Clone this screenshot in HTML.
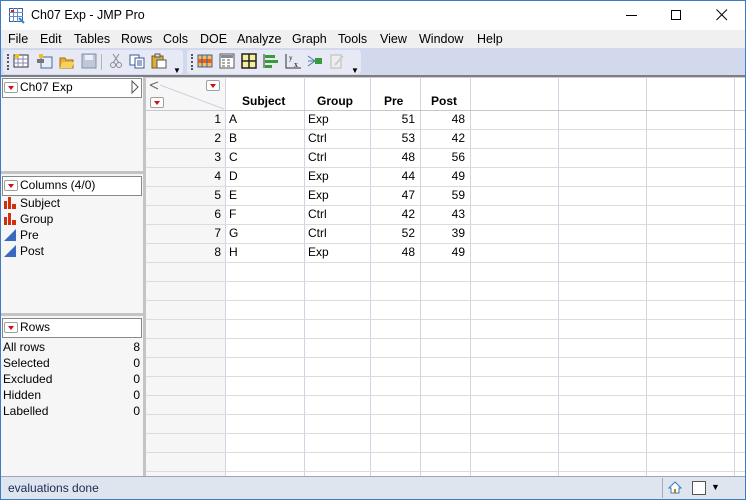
<!DOCTYPE html>
<html><head><meta charset="utf-8">
<style>
*{margin:0;padding:0;box-sizing:border-box}
body{width:746px;height:500px;overflow:hidden;background:#fff;font-family:"Liberation Sans",sans-serif;font-size:12px;color:#000;position:relative}
.a{position:absolute}
.menu span{position:absolute;top:32px;font-size:12.5px}
.tri{display:inline-block;width:14px;height:11px;border:1px solid #a0a0a0;border-radius:2px;background:#fff;position:absolute}
.tri:after{content:"";position:absolute;left:3px;top:3px;border-left:3.5px solid transparent;border-right:3.5px solid transparent;border-top:4px solid #d01010}
.lp{font-size:12px}
.vl{position:absolute;top:77px;width:1px;height:400px;background:#d3d3e3}
.hl{position:absolute;left:146px;width:600px;height:1px;background:#dcdcdc}
.c{position:absolute;font-size:12px;line-height:19px}
.r{text-align:right}
.ico{position:absolute;top:53px;width:16px;height:16px}
</style></head><body>
<div class="a" style="left:0;top:0;width:746px;height:500px;border:1px solid #3c7dc4;pointer-events:none;z-index:9"></div>
<!-- title -->
<svg class="a" style="left:9px;top:8px" width="16" height="16"><rect x="0.5" y="0.5" width="13" height="13" fill="#fff" stroke="#3a5fa8"/><path d="M0 4.5H14M0 8.5H14M4.5 0V14M8.5 0V14" stroke="#6a8ac8"/><rect x="2" y="2" width="3" height="2" fill="#d02020"/><path d="M10 10l5 5" stroke="#2a8ad0" stroke-width="2"/></svg>
<div class="a" style="left:31px;top:8px;font-size:12.5px">Ch07 Exp - JMP Pro</div>
<div class="a" style="left:626px;top:15px;width:11px;height:1px;background:#000"></div>
<div class="a" style="left:671px;top:10px;width:10px;height:10px;border:1px solid #000"></div>
<svg class="a" style="left:716px;top:9px" width="12" height="12"><path d="M0.5 0.5L11 11M11 0.5L0.5 11" stroke="#000"/></svg>
<!-- menu -->
<div class="a menu" style="left:1px;top:30px;width:744px;height:18px;background:#f0f0f0">
</div>
<div class="menu">
<span style="left:8px">File</span><span style="left:40px">Edit</span><span style="left:74px">Tables</span><span style="left:121px">Rows</span><span style="left:163px">Cols</span><span style="left:200px">DOE</span><span style="left:237px">Analyze</span><span style="left:292px">Graph</span><span style="left:338px">Tools</span><span style="left:380px">View</span><span style="left:419px">Window</span><span style="left:477px">Help</span>
</div>
<!-- toolbar -->
<div class="a" style="left:1px;top:48px;width:744px;height:28px;background:#d3d9ec"></div>
<div class="a" style="left:3px;top:50px;width:180px;height:24px;background:#e7eaf4;border-radius:3px"></div>
<div class="a" style="left:187px;top:50px;width:174px;height:24px;background:#e7eaf4;border-radius:3px"></div>
<div class="a" style="left:7px;top:54px;width:2px;height:16px;border-left:2px dotted #555"></div>
<div class="a" style="left:191px;top:54px;width:2px;height:16px;border-left:2px dotted #555"></div>
<svg class="ico" style="left:13px"><rect x="1" y="2" width="14" height="12" fill="#fff" stroke="#334"/><path d="M1 6H15M1 10H15M5 2V14M10 2V14" stroke="#88a"/><rect x="2" y="1" width="4" height="4" fill="#f0c020"/></svg>
<svg class="ico" style="left:37px"><rect x="4" y="4" width="11" height="11" fill="#e8eef8" stroke="#4a6a9a"/><rect x="0" y="6" width="7" height="4" fill="#777"/><rect x="2" y="1" width="4" height="4" fill="#f0c020"/></svg>
<svg class="ico" style="left:59px"><path d="M1 5h5l1 2h7v8H1z" fill="#e8b030" stroke="#a07010"/><path d="M3 9h12l-2 6H1z" fill="#f8d060"/></svg>
<svg class="ico" style="left:81px"><rect x="1" y="1" width="14" height="14" fill="#c0c8d8" stroke="#8090a8"/><rect x="4" y="2" width="8" height="5" fill="#eef"/></svg>
<div class="a" style="left:101px;top:54px;width:1px;height:16px;background:#b0b4c0"></div>
<svg class="ico" style="left:108px"><circle cx="5" cy="12" r="2.5" fill="none" stroke="#889"/><circle cx="11" cy="12" r="2.5" fill="none" stroke="#889"/><path d="M5 10L11 1M11 10L5 1" stroke="#889"/></svg>
<svg class="ico" style="left:129px"><rect x="1" y="2" width="9" height="10" fill="#fff" stroke="#3a5a9a"/><rect x="6" y="5" width="9" height="10" fill="#fff" stroke="#3a5a9a"/><path d="M8 8h5M8 10h5M8 12h5" stroke="#3a5a9a"/></svg>
<svg class="ico" style="left:151px"><rect x="1" y="3" width="11" height="12" fill="#d8b040" stroke="#7a5a10"/><rect x="4" y="1" width="5" height="3" fill="#ddd" stroke="#555"/><rect x="6" y="7" width="9" height="8" fill="#fff" stroke="#555"/></svg>
<div class="a" style="left:173px;top:66px;font-size:8px">&#9660;</div>
<svg class="ico" style="left:197px"><rect x="1" y="2" width="14" height="12" fill="#f0c060" stroke="#4060a0"/><rect x="1" y="6" width="14" height="4" fill="#e86020"/><path d="M5 2V14M10 2V14" stroke="#4060a0"/></svg>
<svg class="ico" style="left:219px"><rect x="1" y="1" width="14" height="14" fill="#fff" stroke="#555"/><rect x="2" y="2" width="12" height="3" fill="#889"/><path d="M3 7h3M8 7h3M3 10h3M8 10h3M3 13h3M8 13h3" stroke="#555"/></svg>
<svg class="ico" style="left:241px"><rect x="1" y="1" width="14" height="14" fill="#f4ef9a" stroke="#222" stroke-width="1.5"/><path d="M8 1V15M1 8H15" stroke="#222" stroke-width="1.5"/></svg>
<svg class="ico" style="left:263px"><path d="M1 1V15" stroke="#333"/><rect x="2" y="2" width="10" height="3" fill="#3a9a3a"/><rect x="2" y="7" width="13" height="3" fill="#3a9a3a"/><rect x="2" y="12" width="7" height="3" fill="#3a9a3a"/></svg>
<svg class="ico" style="left:285px"><path d="M1 1V15H16" stroke="#333" fill="none"/><text x="4" y="7" font-size="7" font-family="Liberation Serif">y</text><text x="9" y="14" font-size="8" font-family="Liberation Serif">x</text></svg>
<svg class="ico" style="left:307px"><path d="M1 3L8 8M1 8H8M1 13L8 8" stroke="#4a7ab0"/><rect x="8" y="5" width="7" height="6" fill="#3a9a3a"/></svg>
<svg class="ico" style="left:329px"><rect x="2" y="2" width="10" height="13" fill="#eee" stroke="#bbb"/><path d="M6 12L14 3" stroke="#ccc" stroke-width="2"/></svg>
<div class="a" style="left:351px;top:66px;font-size:8px">&#9660;</div>
<div class="a" style="left:1px;top:75px;width:744px;height:2px;background:#7c7c84"></div>
<!-- left panel -->
<div class="a" style="left:1px;top:77px;width:142px;height:400px;background:#f6f6f6"></div>
<div class="a" style="left:143px;top:77px;width:3px;height:400px;background:#c4c4c4"></div>
<div class="a" style="left:2px;top:78px;width:140px;height:20px;background:#fff;border:1px solid #888"></div>
<span class="tri" style="left:4px;top:82px"></span>
<div class="a lp" style="left:20px;top:80px">Ch07 Exp</div>
<svg class="a" style="left:131px;top:80px" width="8" height="14"><path d="M1 1L7 7L1 13Z" fill="#fff" stroke="#555"/></svg>
<div class="a" style="left:1px;top:171px;width:142px;height:3px;background:#c4c4c4"></div>
<div class="a" style="left:2px;top:176px;width:140px;height:20px;background:#fff;border:1px solid #888"></div>
<span class="tri" style="left:4px;top:180px"></span>
<div class="a lp" style="left:20px;top:178px">Columns (4/0)</div>
<svg class="a" style="left:4px;top:197px" width="12" height="12"><rect x="0" y="4" width="3" height="8" fill="#d03010"/><rect x="4" y="0" width="3" height="12" fill="#d03010"/><rect x="8" y="7" width="4" height="5" fill="#d03010"/></svg>
<div class="a lp" style="left:20px;top:196px">Subject</div>
<svg class="a" style="left:4px;top:213px" width="12" height="12"><rect x="0" y="4" width="3" height="8" fill="#d03010"/><rect x="4" y="0" width="3" height="12" fill="#d03010"/><rect x="8" y="7" width="4" height="5" fill="#d03010"/></svg>
<div class="a lp" style="left:20px;top:212px">Group</div>
<svg class="a" style="left:4px;top:229px" width="12" height="12"><path d="M0 12L12 0V12Z" fill="#3a6ac0"/></svg>
<div class="a lp" style="left:20px;top:228px">Pre</div>
<svg class="a" style="left:4px;top:245px" width="12" height="12"><path d="M0 12L12 0V12Z" fill="#3a6ac0"/></svg>
<div class="a lp" style="left:20px;top:244px">Post</div>
<div class="a" style="left:1px;top:313px;width:142px;height:3px;background:#c4c4c4"></div>
<div class="a" style="left:2px;top:318px;width:140px;height:20px;background:#fff;border:1px solid #888"></div>
<span class="tri" style="left:4px;top:322px"></span>
<div class="a lp" style="left:20px;top:320px">Rows</div>
<div class="a lp" style="left:3px;top:339px;width:137px;line-height:16px">
<div>All rows<span style="float:right">8</span></div>
<div>Selected<span style="float:right">0</span></div>
<div>Excluded<span style="float:right">0</span></div>
<div>Hidden<span style="float:right">0</span></div>
<div>Labelled<span style="float:right">0</span></div>
</div>
<!-- grid -->
<div class="a" style="left:146px;top:77px;width:79px;height:400px;background:#f6f6f6"></div>
<svg class="a" style="left:146px;top:77px" width="80" height="34"><path d="M12 5L4 8M12 12L4 8M4 8" stroke="#666" fill="none"/><path d="M14 8L78 32" stroke="#d0d0e0"/></svg>
<span class="tri" style="left:206px;top:80px"></span>
<span class="tri" style="left:150px;top:97px"></span>
<div class="a" style="left:146px;top:77px;width:600px;height:1px;background:#ccc"></div>
<div class="vl" style="left:225px"></div>
<div class="vl" style="left:304px"></div>
<div class="vl" style="left:370px"></div>
<div class="vl" style="left:420px"></div>
<div class="vl" style="left:470px"></div>
<div class="vl" style="left:558px"></div>
<div class="vl" style="left:646px"></div>
<div class="vl" style="left:734px"></div>
<div class="hl" style="top:110px;background:#c8c8c8"></div>
<div class="hl" style="top:129px"></div><div class="hl" style="top:148px"></div><div class="hl" style="top:167px"></div><div class="hl" style="top:186px"></div><div class="hl" style="top:205px"></div><div class="hl" style="top:224px"></div><div class="hl" style="top:243px"></div><div class="hl" style="top:262px"></div><div class="hl" style="top:281px"></div><div class="hl" style="top:300px"></div><div class="hl" style="top:319px"></div><div class="hl" style="top:338px"></div><div class="hl" style="top:357px"></div><div class="hl" style="top:376px"></div><div class="hl" style="top:395px"></div><div class="hl" style="top:414px"></div><div class="hl" style="top:433px"></div><div class="hl" style="top:452px"></div><div class="hl" style="top:471px"></div>
<div class="c" style="left:242px;top:92px;font-weight:bold">Subject</div>
<div class="c" style="left:317px;top:92px;font-weight:bold">Group</div>
<div class="c" style="left:384px;top:92px;font-weight:bold">Pre</div>
<div class="c" style="left:431px;top:92px;font-weight:bold">Post</div>
<div class="c r" style="left:150px;top:110px;width:71px">1<br>2<br>3<br>4<br>5<br>6<br>7<br>8</div>
<div class="c" style="left:229px;top:110px">A<br>B<br>C<br>D<br>E<br>F<br>G<br>H</div>
<div class="c" style="left:308px;top:110px">Exp<br>Ctrl<br>Ctrl<br>Exp<br>Exp<br>Ctrl<br>Ctrl<br>Exp</div>
<div class="c r" style="left:370px;top:110px;width:45px">51<br>53<br>48<br>44<br>47<br>42<br>52<br>48</div>
<div class="c r" style="left:420px;top:110px;width:45px">48<br>42<br>56<br>49<br>59<br>43<br>39<br>49</div>
<!-- status -->
<div class="a" style="left:1px;top:476px;width:744px;height:1px;background:#9aa6c0"></div>
<div class="a" style="left:1px;top:477px;width:744px;height:22px;background:#dfe5ef"></div>
<div class="a" style="left:8px;top:481px;font-size:12px;color:#1a2a50">evaluations done</div>
<div class="a" style="left:662px;top:478px;width:1px;height:20px;background:#aab"></div>
<svg class="a" style="left:668px;top:481px" width="14" height="13"><path d="M7 1L1 7H3V12H11V7H13Z" fill="#fff" stroke="#3a7ac0"/><rect x="6" y="8" width="2" height="4" fill="#c08020"/></svg>
<div class="a" style="left:692px;top:481px;width:14px;height:14px;background:#fff;border:1px solid #555"></div>
<div class="a" style="left:711px;top:482px;font-size:9px">&#9660;</div>
</body></html>
